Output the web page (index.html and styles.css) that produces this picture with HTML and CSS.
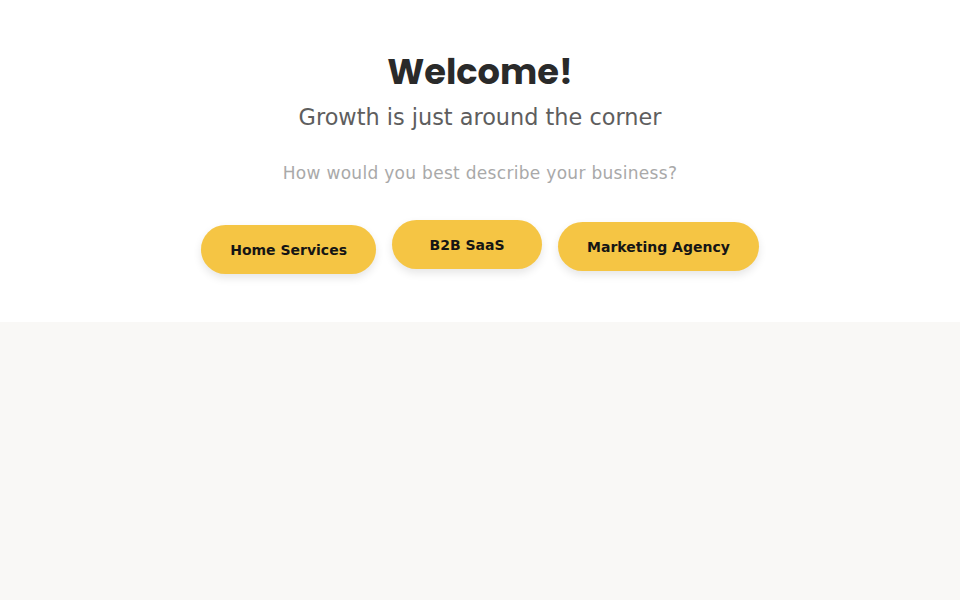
FILE: index.html
```html
<!DOCTYPE html>
<html lang="en">
<head>
<meta charset="utf-8">
<title>Welcome</title>
<link rel="stylesheet" href="styles.css">
</head>
<body>
<section class="hero">
  <h1 class="title">Welcome!</h1>
  <p class="subtitle">Growth is just around the corner</p>
  <p class="question">How would you best describe your business?</p>
  <div class="options">
    <button class="option option-low">Home Services</button>
    <button class="option option-high option-wide">B2B SaaS</button>
    <button class="option option-mid">Marketing Agency</button>
  </div>
</section>
<section class="lower"></section>
</body>
</html>
```

FILE: styles.css
```css
html, body {
  margin: 0;
  padding: 0;
  height: 100%;
}
body {
  background: #f9f8f6;
  font-family: "DejaVu Sans", sans-serif;
  display: flex;
  flex-direction: column;
}
.hero {
  background: #ffffff;
  height: 322px;
  display: flex;
  flex-direction: column;
  align-items: center;
  padding-top: 50px;
  box-sizing: border-box;
}
.title {
  margin: 0;
  font-family: Poppins, Inter, sans-serif;
  font-weight: 700;
  font-size: 35.2px;
  line-height: 44px;
  color: #2a2a2a;
}
.subtitle {
  margin: 8px 0 0;
  font-size: 22.4px;
  line-height: 30px;
  color: #5e5e5e;
}
.question {
  margin: 29px 0 0;
  font-size: 17px;
  line-height: 24px;
  color: #a9a9a9;
  letter-spacing: 0.3px;
}
.options {
  display: flex;
  gap: 16px;
  align-items: flex-start;
  margin-top: 35px;
}
.option {
  border: none;
  background: #f5c544;
  color: #151515;
  font-family: "DejaVu Sans", sans-serif;
  font-weight: bold;
  font-size: 14px;
  height: 49px;
  padding: 0 29px;
  border-radius: 25px;
  box-shadow: 0 4px 8px rgba(0, 0, 0, 0.10);
  cursor: pointer;
}
.option-wide { min-width: 150px; }
.option-low { margin-top: 5px; }
.option-high { margin-top: 0; }
.option-mid { margin-top: 2px; }
.lower {
  flex: 1;
}
```
